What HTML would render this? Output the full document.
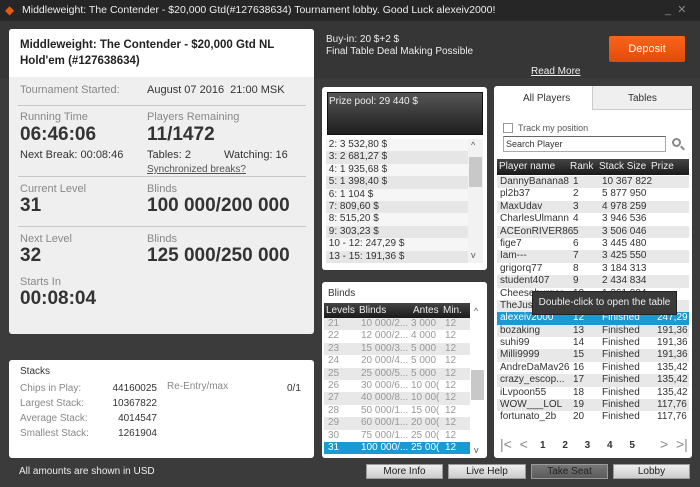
<!DOCTYPE html>
<html><head><meta charset="utf-8"><style>
*{margin:0;padding:0;box-sizing:border-box}
body{width:700px;height:487px;background:#3b3b3b;font-family:"Liberation Sans",sans-serif;position:relative;overflow:hidden;color:#333}
.a{position:absolute}
.t{font-size:11px;white-space:nowrap}
.g{color:#888}
.big{font-size:19px;font-weight:bold;color:#333;letter-spacing:0}
.hr{position:absolute;left:18px;width:288px;height:1px;background:#c8c8c8}
.row{height:12.4px;line-height:12.4px;font-size:10px;white-space:nowrap;position:relative}
.row:nth-child(odd){background:#e8e8e8}
.pz .row:nth-child(odd){background:#f6f6f6}
.pz .row:nth-child(even){background:#e6e6e6}
.row span{position:absolute}
.btn{position:absolute;top:464px;height:15px;background:linear-gradient(#eee,#ccc);border:1px solid #999;font-size:10px;text-align:center;line-height:13px;color:#222}
</style></head><body>
<div class="a" style="left:0;top:0;width:700px;height:21px;background:#262626"></div>
<div class="a" style="left:5px;top:3px;color:#e55a10;font-size:12px">&#9670;</div>
<div class="a t" style="left:22px;top:4px;color:#eee;font-size:10.5px">Middleweight: The Contender - $20,000 Gtd(#127638634) Tournament lobby. Good Luck alexeiv2000!</div>
<div class="a t" style="left:665px;top:3px;color:#888">_&nbsp;&nbsp;✕</div>
<div class="a" style="left:0;top:21px;width:700px;height:57px;background:#363636"></div>
<div class="a t" style="left:326px;top:34px;color:#eee;font-size:10px">Buy-in: 20 $+2 $</div>
<div class="a t" style="left:326px;top:46px;color:#eee;font-size:10px">Final Table Deal Making Possible</div>
<div class="a t" style="left:531px;top:66px;color:#eee;font-size:10px;text-decoration:underline">Read More</div>
<div class="a" style="left:609px;top:36px;width:76px;height:26px;background:linear-gradient(#f8651e,#e24a08);border-radius:2px;color:#fff;font-size:11px;text-align:center;line-height:26px">Deposit</div>

<div class="a" style="left:9px;top:29px;width:305px;height:305px;background:#efefef;border-radius:3px"></div>
<div class="a" style="left:9px;top:29px;width:305px;height:48px;background:#fff;border-radius:3px 3px 0 0"></div>
<div class="a" style="left:20px;top:37px;font-size:11.5px;font-weight:bold;line-height:16px;color:#222">Middleweight: The Contender - $20,000 Gtd NL<br>Hold'em (#127638634)</div>
<div class="a t g" style="left:20px;top:84px">Tournament Started:</div>
<div class="a t" style="left:147px;top:84px">August 07 2016&nbsp; 21:00 MSK</div>
<div class="hr" style="top:105px"></div>
<div class="a t g" style="left:20px;top:111px">Running Time</div>
<div class="a t g" style="left:147px;top:111px">Players Remaining</div>
<div class="a big" style="left:20px;top:124px">06:46:06</div>
<div class="a big" style="left:147px;top:124px">11/1472</div>
<div class="a t" style="left:20px;top:149px">Next Break: 00:08:46</div>
<div class="a t" style="left:147px;top:149px">Tables: 2</div>
<div class="a t" style="left:224px;top:149px">Watching: 16</div>
<div class="a t" style="left:147px;top:164px;font-size:10px;color:#555;text-decoration:underline">Synchronized breaks?</div>
<div class="hr" style="top:176px"></div>
<div class="a t g" style="left:20px;top:183px">Current Level</div>
<div class="a t g" style="left:147px;top:183px">Blinds</div>
<div class="a big" style="left:20px;top:195px">31</div>
<div class="a big" style="left:147px;top:195px">100 000/200 000</div>
<div class="hr" style="top:226px"></div>
<div class="a t g" style="left:20px;top:233px">Next Level</div>
<div class="a t g" style="left:147px;top:233px">Blinds</div>
<div class="a big" style="left:20px;top:245px">32</div>
<div class="a big" style="left:147px;top:245px">125 000/250 000</div>
<div class="a t g" style="left:20px;top:276px">Starts In</div>
<div class="a big" style="left:20px;top:288px">00:08:04</div>

<div class="a" style="left:9px;top:360px;width:305px;height:98px;background:#fff;border-radius:3px"></div>
<div class="a t" style="left:20px;top:366px;font-size:10px">Stacks</div>
<div class="a g" style="left:20px;top:381px;font-size:10px;line-height:15px">Chips in Play:<br>Largest Stack:<br>Average Stack:<br>Smallest Stack:</div>
<div class="a" style="left:110px;top:381px;font-size:10px;line-height:15px;text-align:right;width:47px">44160025<br>10367822<br>4014547<br>1261904</div>
<div class="a t g" style="left:167px;top:381px;font-size:10px">Re-Entry/max</div>
<div class="a t" style="left:287px;top:383px;font-size:10px">0/1</div>
<div class="a t" style="left:19px;top:466px;color:#eee;font-size:10px">All amounts are shown in USD</div>

<div class="a" style="left:322px;top:87px;width:165px;height:183px;background:#fff;border-radius:3px"></div>
<div class="a" style="left:327px;top:92px;width:156px;height:43px;background:linear-gradient(#555,#1e1e1e);border:1px solid #111"></div>
<div class="a t" style="left:329px;top:96px;color:#eee;font-size:10px">Prize pool: 29 440 $</div>
<div class="a pz" style="left:326px;top:139px;width:142px">
<div class="row">&nbsp;2: 3 532,80 $</div><div class="row">&nbsp;3: 2 681,27 $</div><div class="row">&nbsp;4: 1 935,68 $</div><div class="row">&nbsp;5: 1 398,40 $</div><div class="row">&nbsp;6: 1 104 $</div><div class="row">&nbsp;7: 809,60 $</div><div class="row">&nbsp;8: 515,20 $</div><div class="row">&nbsp;9: 303,23 $</div><div class="row">&nbsp;10 - 12: 247,29 $</div><div class="row">&nbsp;13 - 15: 191,36 $</div></div>
<div class="a" style="left:468px;top:139px;width:15px;height:124px;background:#f2f2f2"></div>
<div class="a" style="left:469px;top:157px;width:13px;height:30px;background:#c8c8c8"></div>
<div class="a t" style="left:471px;top:140px;font-size:9px;color:#555">^</div>
<div class="a t" style="left:471px;top:250px;font-size:9px;color:#555">v</div>

<div class="a" style="left:322px;top:282px;width:165px;height:176px;background:#fff;border-radius:3px"></div>
<div class="a t" style="left:328px;top:288px;font-size:10px">Blinds</div>
<div class="a" style="left:324px;top:303px;width:146px;height:15px;background:linear-gradient(#444,#1a1a1a);color:#eee;font-size:10px;line-height:15px">
<span class="a" style="left:2px">Levels</span><span class="a" style="left:35px">Blinds</span><span class="a" style="left:89px">Antes</span><span class="a" style="left:119px">Min.</span></div>
<div class="a" style="left:324px;top:318px;width:146px;color:#999">
<div class="row"><span style="left:4px">21</span><span style="left:37px">10 000/2...</span><span style="left:87px">3 000</span><span style="left:121px">12</span></div>
<div class="row"><span style="left:4px">22</span><span style="left:37px">12 000/2...</span><span style="left:87px">4 000</span><span style="left:121px">12</span></div>
<div class="row"><span style="left:4px">23</span><span style="left:37px">15 000/3...</span><span style="left:87px">5 000</span><span style="left:121px">12</span></div>
<div class="row"><span style="left:4px">24</span><span style="left:37px">20 000/4...</span><span style="left:87px">5 000</span><span style="left:121px">12</span></div>
<div class="row"><span style="left:4px">25</span><span style="left:37px">25 000/5...</span><span style="left:87px">5 000</span><span style="left:121px">12</span></div>
<div class="row"><span style="left:4px">26</span><span style="left:37px">30 000/6...</span><span style="left:87px">10 00(</span><span style="left:121px">12</span></div>
<div class="row"><span style="left:4px">27</span><span style="left:37px">40 000/8...</span><span style="left:87px">10 00(</span><span style="left:121px">12</span></div>
<div class="row"><span style="left:4px">28</span><span style="left:37px">50 000/1...</span><span style="left:87px">15 00(</span><span style="left:121px">12</span></div>
<div class="row"><span style="left:4px">29</span><span style="left:37px">60 000/1...</span><span style="left:87px">20 00(</span><span style="left:121px">12</span></div>
<div class="row"><span style="left:4px">30</span><span style="left:37px">75 000/1...</span><span style="left:87px">25 00(</span><span style="left:121px">12</span></div>
<div class="row" style="background:#1a9ad0;color:#fff"><span style="left:4px">31</span><span style="left:37px">100 000/...</span><span style="left:87px">25 00(</span><span style="left:121px">12</span></div></div>
<div class="a" style="left:471px;top:370px;width:13px;height:30px;background:#c8c8c8"></div>
<div class="a t" style="left:474px;top:306px;font-size:9px;color:#555">^</div>
<div class="a t" style="left:474px;top:445px;font-size:9px;color:#555">v</div>

<div class="a" style="left:494px;top:86px;width:198px;height:372px;background:#fff;border-radius:3px"></div>
<div class="a" style="left:592px;top:86px;width:100px;height:24px;background:#efefef;border-left:1px solid #ccc;border-bottom:1px solid #ccc"></div>
<div class="a t" style="left:523px;top:93px;font-size:10px">All Players</div>
<div class="a t" style="left:628px;top:93px;font-size:10px">Tables</div>
<div class="a" style="left:503px;top:123px;width:10px;height:10px;border:1px solid #999"></div>
<div class="a t" style="left:518px;top:123px;font-size:9px;color:#555">Track my position</div>
<div class="a" style="left:503px;top:136px;width:163px;height:16px;border:1px solid #aaa;border-top-color:#666;font-size:9px;line-height:14px;padding-left:2px">Search Player</div>
<div class="a" style="left:672px;top:138px;width:9px;height:9px;border:2px solid #888;border-radius:50%"></div>
<div class="a" style="left:680px;top:147px;width:5px;height:2px;background:#888;transform:rotate(45deg)"></div>
<div class="a" style="left:497px;top:159px;width:192px;height:16px;background:linear-gradient(#444,#1a1a1a);color:#eee;font-size:10px;line-height:16px">
<span class="a" style="left:2px">Player name</span><span class="a" style="left:73px">Rank</span><span class="a" style="left:102px">Stack Size</span><span class="a" style="left:154px">Prize</span></div>
<div class="a" style="left:497px;top:176px;width:192px;height:248px;overflow:hidden">
<div class="row"><span style="left:3px">DannyBanana8</span><span style="left:76px">1</span><span style="left:105px">10 367 822</span></div>
<div class="row"><span style="left:3px">pl2b37</span><span style="left:76px">2</span><span style="left:105px">5 877 950</span></div>
<div class="row"><span style="left:3px">MaxUdav</span><span style="left:76px">3</span><span style="left:105px">4 978 259</span></div>
<div class="row"><span style="left:3px">CharlesUlmann</span><span style="left:76px">4</span><span style="left:105px">3 946 536</span></div>
<div class="row"><span style="left:3px">ACEonRIVER86</span><span style="left:76px">5</span><span style="left:105px">3 506 046</span></div>
<div class="row"><span style="left:3px">fige7</span><span style="left:76px">6</span><span style="left:105px">3 445 480</span></div>
<div class="row"><span style="left:3px">Iam---</span><span style="left:76px">7</span><span style="left:105px">3 425 550</span></div>
<div class="row"><span style="left:3px">grigorq77</span><span style="left:76px">8</span><span style="left:105px">3 184 313</span></div>
<div class="row"><span style="left:3px">student407</span><span style="left:76px">9</span><span style="left:105px">2 434 834</span></div>
<div class="row"><span style="left:3px">Cheeseburger</span><span style="left:76px">10</span><span style="left:105px">1 261 904</span></div>
<div class="row"><span style="left:3px">TheJustice</span><span style="left:76px">11</span><span style="left:105px">Finished</span></div>
<div class="row" style="background:#1a9ad0;color:#fff"><span style="left:3px">alexeiv2000</span><span style="left:76px">12</span><span style="left:105px">Finished</span><span style="left:160px">247,29 $</span></div>
<div class="row"><span style="left:3px">bozaking</span><span style="left:76px">13</span><span style="left:105px">Finished</span><span style="left:160px">191,36 $</span></div>
<div class="row"><span style="left:3px">suhi99</span><span style="left:76px">14</span><span style="left:105px">Finished</span><span style="left:160px">191,36 $</span></div>
<div class="row"><span style="left:3px">Milli9999</span><span style="left:76px">15</span><span style="left:105px">Finished</span><span style="left:160px">191,36 $</span></div>
<div class="row"><span style="left:3px">AndreDaMav26</span><span style="left:76px">16</span><span style="left:105px">Finished</span><span style="left:160px">135,42 $</span></div>
<div class="row"><span style="left:3px">crazy_escop...</span><span style="left:76px">17</span><span style="left:105px">Finished</span><span style="left:160px">135,42 $</span></div>
<div class="row"><span style="left:3px">iLvpoon55</span><span style="left:76px">18</span><span style="left:105px">Finished</span><span style="left:160px">135,42 $</span></div>
<div class="row"><span style="left:3px">WOW___LOL</span><span style="left:76px">19</span><span style="left:105px">Finished</span><span style="left:160px">117,76 $</span></div>
<div class="row"><span style="left:3px">fortunato_2b</span><span style="left:76px">20</span><span style="left:105px">Finished</span><span style="left:160px">117,76 $</span></div>
</div>
<div class="a" style="left:532px;top:291px;width:145px;height:24px;background:#3a3a3a;border:1px solid #222;color:#eee;font-size:10px;line-height:22px;text-align:center">Double-click to open the table</div>
<div class="a t" style="left:500px;top:436px;font-size:14px;color:#888">|&lt;&nbsp;&nbsp;&lt;</div>
<div class="a t" style="left:540px;top:440px;font-size:10px;font-weight:bold;color:#333;word-spacing:14px">1 2 3 4 5</div>
<div class="a t" style="left:660px;top:436px;font-size:14px;color:#888">&gt;&nbsp;&nbsp;&gt;|</div>

<div class="btn" style="left:366px;width:77px">More Info</div>
<div class="btn" style="left:448px;width:78px">Live Help</div>
<div class="btn" style="left:531px;width:77px;background:linear-gradient(#777,#5a5a5a);color:#222">Take Seat</div>
<div class="btn" style="left:613px;width:77px">Lobby</div>
</body></html>
